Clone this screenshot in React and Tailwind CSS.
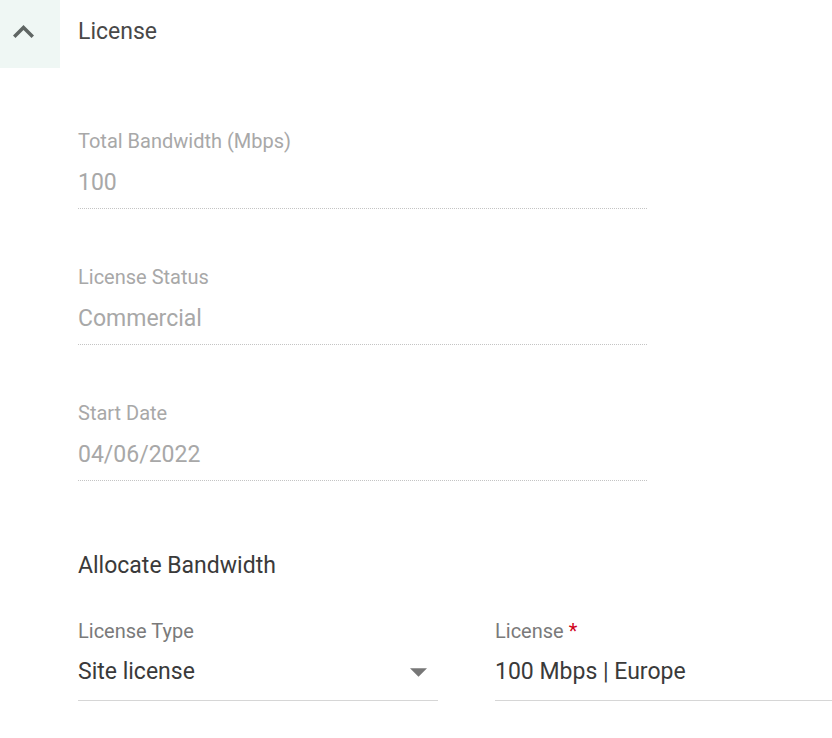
export default function App() {
  const fields = [
    { label: 'Total Bandwidth (Mbps)', value: '100' },
    { label: 'License Status', value: 'Commercial' },
    { label: 'Start Date', value: '04/06/2022' },
  ];

  return (
    <div className="w-[832px] h-[738px] bg-white overflow-hidden" style={{ fontFamily: 'Roboto, "Noto Sans", sans-serif' }}>
      {/* Header */}
      <div className="flex h-[68px]">
        <div className="w-[60px] bg-[#eff7f4] flex items-center">
          <svg viewBox="6 8 12 7.41" className="ml-[13px] -mt-[5px] w-[21px] h-[13px]" fill="#5f6663">
            <path d="M12 8l-6 6 1.41 1.41L12 10.83l4.59 4.58L18 14z" />
          </svg>
        </div>
        <div className="pl-[18px] flex items-center -mt-[4px] text-[23px] text-[#484848]">License</div>
      </div>

      <div className="pl-[78px]">
        {/* Read-only fields */}
        {fields.map((f) => (
          <div key={f.label} className="w-[569px] mt-[56px] first:mt-[61px] border-b border-dotted border-[#c4c4c4] pb-[10px]">
            <div className="text-[20px] leading-[24px] text-[#a8a8a8]">{f.label}</div>
            <div className="mt-[15px] text-[23px] leading-[30px] text-[#a8a8a8]">{f.value}</div>
          </div>
        ))}

        <div className="mt-[71px] text-[23px] leading-[28px] text-[#3a3a3a]">Allocate Bandwidth</div>

        <div className="mt-[39px] flex gap-[57px]">
          <div className="w-[360px] border-b border-[#d6d6d6] pb-[13px]">
            <div className="text-[20px] leading-[24px] text-[#7a7a7a]">License Type</div>
            <div className="mt-[14px] h-[30px] flex items-center justify-between text-[23px] leading-[30px] text-[#3a3a3a]">
              <span>Site license</span>
              <svg viewBox="0 0 17 8.5" className="w-[17px] h-[9px] mr-[11px]" fill="#777777">
                <path d="M0 0l8.5 8.5L17 0z" />
              </svg>
            </div>
          </div>
          <div className="flex-1 border-b border-[#d6d6d6] pb-[13px]">
            <div className="text-[20px] leading-[24px] text-[#7a7a7a]">
              License <span className="text-[#d0021b]">*</span>
            </div>
            <div className="mt-[14px] text-[23px] leading-[30px] text-[#3a3a3a]">100 Mbps | Europe</div>
          </div>
        </div>
      </div>
    </div>
  );
}
